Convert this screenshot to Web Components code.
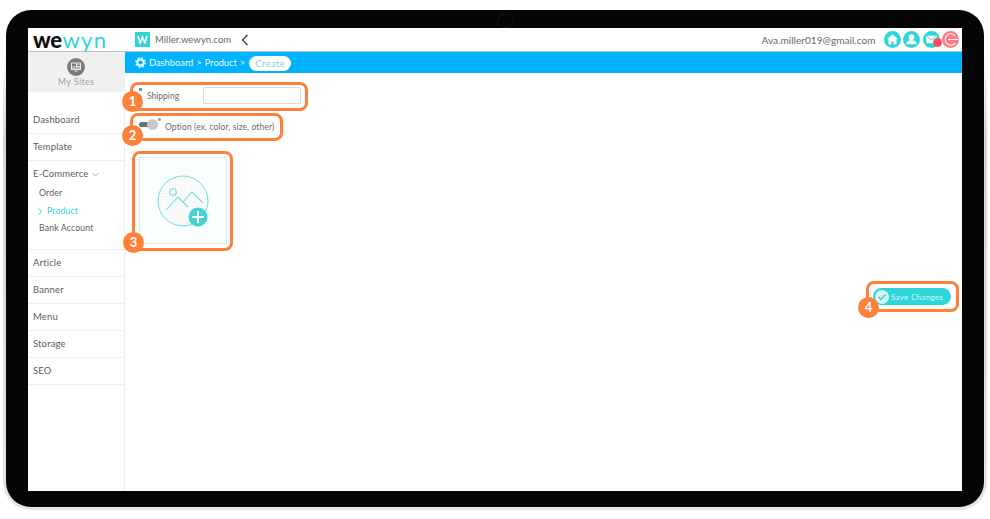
<!DOCTYPE html>
<html><head><meta charset="utf-8">
<style>
html,body{margin:0;padding:0;background:#fff;width:990px;height:519px;overflow:hidden}
body{font-family:Lato,"Open Sans",sans-serif;color:#555}
</style></head><body>
<device-frame>
  <top-bar></top-bar>
  <div style="display:flex;flex:1;min-height:0">
    <side-nav></side-nav>
    <main-pane></main-pane>
  </div>
</device-frame>
<script>
function el(name,html){
  customElements.define(name,class extends HTMLElement{
    constructor(){super();this.attachShadow({mode:'open'}).innerHTML=html;}
  });
}
el('device-frame',`<style>
:host{display:block;box-sizing:border-box;width:990px;height:519px;padding:10px 6px 9px 6px;position:relative}
.edge{box-sizing:border-box;height:100%;margin:0 -3px;padding:0 3px 3px 3px;border-radius:28px;background:linear-gradient(#fff 0,#fff 40px,#d4d4d4 130px,#e4e4e4 100%)}
.body{box-sizing:border-box;height:100%;background:#050505;border-radius:25px;padding:18px 22px 16px 22px;position:relative}
.screen{height:100%;background:#fff;display:flex;flex-direction:column;position:relative}
.cam{position:absolute;left:491px;top:4px;width:17px;height:14px;border-radius:50%;border:1px solid #141414;box-sizing:border-box}
</style>
<div class="edge"><div class="body"><div class="cam"></div><div class="screen"><slot></slot></div></div></div>`);

el('top-bar',`<style>
:host{display:flex;align-items:center;height:23px;flex:none;border-bottom:1px solid #b9c4c6;font-family:Lato,sans-serif;color:#666}
.logo{width:107px;padding-left:5px;box-sizing:border-box;line-height:23px;color:#111;display:flex;align-items:baseline}
.logo i{font:900 22px/23px Lato,sans-serif;letter-spacing:-.4px}
.logo b{font:400 22px/23px Lato,sans-serif;color:#2fd6d8;letter-spacing:1.2px;margin-left:1px}
.site{display:flex;align-items:center;font-size:9.500px;gap:5px;letter-spacing:.04px}
.mark{width:15px;height:15px;background:#2fd6d8;color:#fff;display:flex;align-items:center;justify-content:center}
.back{margin-left:10px;display:flex}
.r{margin-left:auto;display:flex;align-items:center;padding-right:3px;font-size:10px}
.mail{margin-right:8px;letter-spacing:.05px}
.ic{position:relative;width:17px;height:17px;margin-right:2.500px;flex:none}
.ic:last-child{margin-right:0}
.ic svg{display:block}
.dot{position:absolute;left:10px;top:7px;width:9px;height:9px;border-radius:50%;background:#f4525d}
</style>
<div class="logo"><i>we</i><b>wyn</b></div>
<div class="site">
 <span class="mark"><svg width="11" height="9" viewBox="0 0 11 9" fill="none" stroke="#fff" stroke-width="1.6"><path d="M1 1l2.200 7L5.500 2l2.300 6L10 1"/></svg></span>
 <span>Miller.wewyn.com</span>
</div>
<span class="back"><svg width="8" height="12" viewBox="0 0 8 12" fill="none" stroke="#444" stroke-width="1.4"><path d="M6.500 1L1.500 6l5 5"/></svg></span>
<div class="r">
 <span class="mail">Ava.miller019@gmail.com</span>
 <span class="ic"><svg width="17" height="17" viewBox="0 0 18 18"><circle cx="9" cy="9" r="9" fill="#2fd6d8"/><path d="M9 3.500L3.200 8.800h1.600v5.400h3V11h2.400v3.200h3V8.800h1.600z" fill="#fff"/></svg></span>
 <span class="ic"><svg width="17" height="17" viewBox="0 0 18 18"><circle cx="9" cy="9" r="9" fill="#2fd6d8"/><circle cx="9" cy="6.500" r="3" fill="#fff"/><path d="M3.500 14c0-3 2.500-4.200 5.500-4.200s5.500 1.200 5.500 4.200z" fill="#fff"/></svg></span>
 <span class="ic"><svg width="17" height="17" viewBox="0 0 18 18"><circle cx="9" cy="9" r="9" fill="#2fd6d8"/><rect x="3.500" y="5" width="11" height="8" fill="#fff"/><path d="M3.500 5L9 9.500 14.500 5" fill="none" stroke="#2fd6d8"/></svg><span class="dot"></span></span>
 <span class="ic"><svg width="17" height="17" viewBox="0 0 18 18"><circle cx="9" cy="9" r="9" fill="#fb7c84"/><path d="M14 5.200A6 6 0 1 0 14 12.800M6.500 9H17" fill="none" stroke="#fff" stroke-width="1.100"/></svg></span>
</div>`);

el('side-nav',`<style>
:host{display:block;width:97px;flex:none;box-sizing:border-box;border-right:1px solid #ececec;font:400 9.500px/12px Lato,sans-serif;color:#5c5c5c}
.sites{height:40px;background:#f0f0f0;display:flex;flex-direction:column;align-items:center;color:#a2a2a2;font-size:9px;letter-spacing:.35px;padding-top:6px;box-sizing:border-box;margin-bottom:15px}
.it{height:27px;box-sizing:border-box;border-bottom:1px solid #eeeeee;padding-left:5px;display:flex;align-items:center;letter-spacing:.15px}
.ec{height:89px;box-sizing:border-box;border-bottom:1px solid #eeeeee;padding:7px 0 0 5px}
.ec>div{height:12px;display:flex;align-items:center;gap:3px;letter-spacing:.15px}
.ec>.sub{margin-left:6px;font-size:8.700px;gap:5px}
.cur{color:#2fd6d8}
</style>
<div class="sites"><svg width="18" height="18" viewBox="0 0 18 18"><circle cx="9" cy="9" r="9" fill="#7c7c7c"/><rect x="4" y="4.500" width="10" height="7.500" fill="#e8e8e8"/><rect x="5" y="5.500" width="4" height="3" fill="#7c7c7c"/><path d="M10 6h3M10 7.500h3M5 10h8" stroke="#7c7c7c"/><rect x="7.500" y="12.500" width="3" height="1" fill="#e8e8e8"/></svg><span>My Sites</span></div>
<div class="it">Dashboard</div>
<div class="it">Template</div>
<div class="ec">
 <div>E-Commerce <svg width="7" height="5" viewBox="0 0 7 5" fill="none" stroke="#aaa"><path d="M.5 1l3 3 3-3"/></svg></div>
 <div class="sub" style="margin-top:7px">Order</div>
 <div class="sub cur" style="margin-top:6px;margin-left:5px"><svg width="4" height="7" viewBox="0 0 4 7" fill="none" stroke="#2fd6d8"><path d="M.5.5l3 3-3 3"/></svg><span>Product</span></div>
 <div class="sub" style="margin-top:5px">Bank Account</div>
</div>
<div class="it">Article</div>
<div class="it">Banner</div>
<div class="it">Menu</div>
<div class="it">Storage</div>
<div class="it">SEO</div>`);

el('main-pane',`<style>
:host{display:flex;flex-direction:column;flex:1;min-width:0;position:relative;font:400 8.500px/12px Lato,sans-serif;color:#6a6a6a}
.crumb{height:21px;background:#00b2fb;color:#e6fbff;display:flex;align-items:center;padding-left:10px;font-size:9.300px;gap:3px;flex:none}
.pill{background:#fff;color:#7fd3d6;border-radius:8px;height:15px;line-height:15px;width:42px;text-align:center;margin-left:1px;font-size:9.500px;letter-spacing:.3px;margin-top:1px}
.ship{display:flex;align-items:center;margin:14px 0 0 22px;position:relative}
.ship .st{position:absolute;left:-8px;top:1px;width:3px;height:3px;background:#8f8f8f}
.ship input{all:unset;box-sizing:border-box;width:98px;height:17px;border:1px solid #dadada;border-radius:2px;margin-left:23px}
.ship span{width:33px}
.opt{display:flex;align-items:center;margin:17px 0 0 14px;position:relative;height:12px}
.tog{position:relative;width:22px;height:11px;margin:0 4px 6px 0;flex:none}
.tog:before{content:"";position:absolute;left:0;top:3px;width:18px;height:5px;border-radius:3px;background:#6f6f6f}
.tog:after{content:"";position:absolute;left:8px;top:0;width:11px;height:11px;border-radius:50%;background:#c9c9c9}
.tog i{position:absolute;left:19px;top:-1px;width:3px;height:3px;background:#8f8f8f;border-radius:50%}
.opt span{letter-spacing:.11px}
.up{box-sizing:border-box;width:88px;height:87px;margin:24px 0 0 14px;border:1px dotted #a8e4e6;display:flex;align-items:center;justify-content:center;background:#fbfefe}
.save{position:absolute;left:748px;top:236px;width:78px;height:17px;box-sizing:border-box;border-radius:9px;background:#2fd6d8;color:#d8f8f8;display:flex;align-items:center;padding-left:2px;gap:2px;font-size:8px;letter-spacing:.3px}
.box{position:absolute;box-sizing:border-box;border:3px solid #ff8039;border-radius:8px;pointer-events:none}
.n{position:absolute;width:21px;height:21px;border-radius:50%;background:#ff8039;color:#fff;font:700 13px/21px Lato,sans-serif;text-align:center}
</style>
<div class="crumb">
 <svg width="11" height="11" viewBox="0 0 11 11"><circle cx="5.500" cy="5.500" r="3.200" fill="none" stroke="#e6fbff" stroke-width="2.200"/><circle cx="5.500" cy="5.500" r="4.800" fill="none" stroke="#e6fbff" stroke-width="1.200" stroke-dasharray="1.900 1.870"/></svg>
 <span>Dashboard</span><span>&gt;</span><span>Product</span><span>&gt;</span><span class="pill">Create</span>
</div>
<div class="ship"><i class="st"></i><span>Shipping</span><input aria-label="Shipping"></div>
<div class="opt"><i class="tog"><i></i></i><span>Option (ex. color, size, other)</span></div>
<div class="up"><svg width="52" height="52" viewBox="0 0 52 52" style="overflow:visible"><defs><pattern id="p" width="3" height="3" patternUnits="userSpaceOnUse"><rect width="3" height="3" fill="#fbfbfb"/><rect width="1.500" height="1.500" fill="#f3f3f3"/></pattern></defs><circle cx="26" cy="26" r="25" fill="url(#p)" stroke="#70dcdc" stroke-width="1"/><circle cx="16" cy="17" r="3.300" fill="none" stroke="#70dcdc" stroke-width="1.100"/><path d="M9 35l12-13 10 10M26 27l9-10 11 11" fill="none" stroke="#70dcdc" stroke-width="1.100"/><circle cx="41" cy="42" r="9.500" fill="#46d2d4"/><path d="M41 36v12M35 42h12" stroke="#fff" stroke-width="2"/></svg></div>
<div class="save"><svg width="14" height="14" viewBox="0 0 14 14"><circle cx="7" cy="7" r="7" fill="#d8f4f4"/><path d="M3.500 7l2.500 2.500L10.500 4.500" fill="none" stroke="#2fd6d8" stroke-width="1.500"/></svg><span>Save Changes</span></div>
<i class="box" style="left:5px;top:30px;width:178px;height:29px"></i>
<i class="box" style="left:5px;top:61px;width:153px;height:28px"></i>
<i class="box" style="left:7px;top:99px;width:101px;height:100px"></i>
<i class="box" style="left:741px;top:229px;width:93px;height:31px"></i>
<b class="n" style="left:-3px;top:39px">1</b>
<b class="n" style="left:-3px;top:73px">2</b>
<b class="n" style="left:-2px;top:180px">3</b>
<b class="n" style="left:733px;top:245px">4</b>`);
</script>
</body></html>
